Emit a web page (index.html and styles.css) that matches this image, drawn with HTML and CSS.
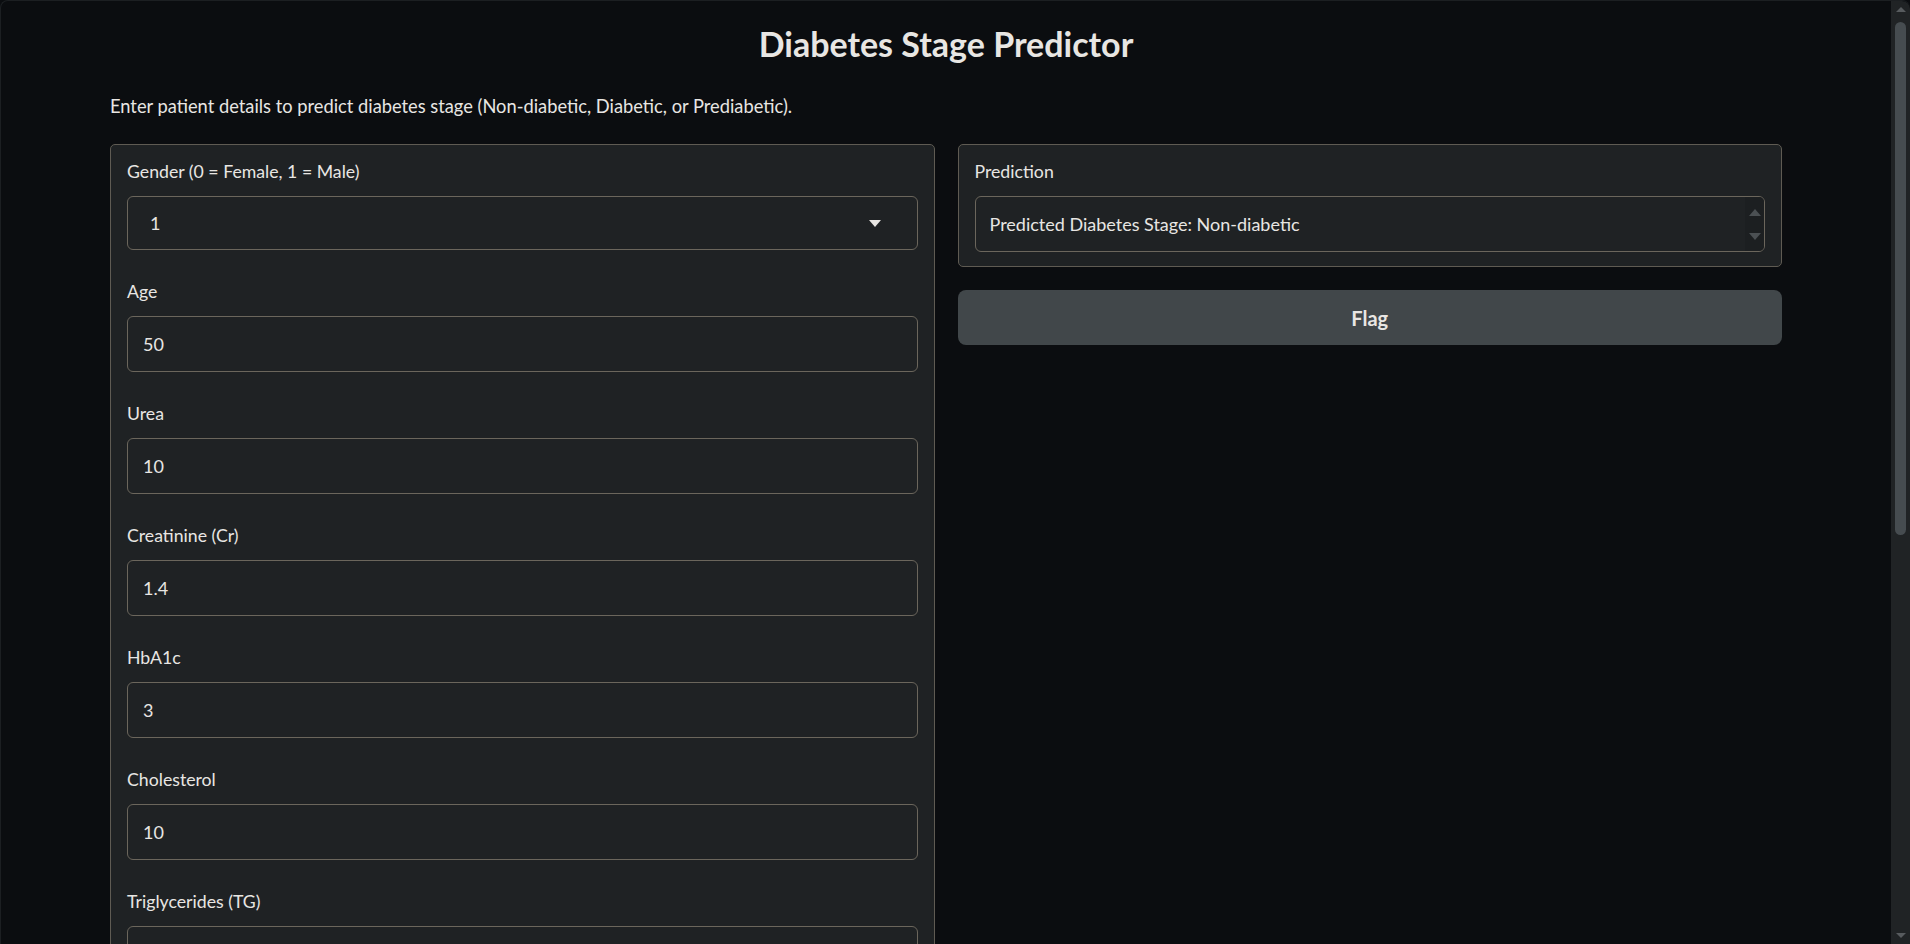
FILE: index.html
```html
<!DOCTYPE html>
<html lang="en">
<head>
<meta charset="utf-8">
<title>Diabetes Stage Predictor</title>
<link rel="stylesheet" href="styles.css">
</head>
<body>
<div class="window">
  <main class="app">
    <div class="container">
      <h1 class="title">Diabetes Stage Predictor</h1>
      <p class="desc">Enter patient details to predict diabetes stage (Non-diabetic, Diabetic, or Prediabetic).</p>
      <div class="row">
        <div class="col">
          <div class="panel form">
            <div class="field">
              <div class="label">Gender (0 = Female, 1 = Male)</div>
              <div class="select">
                <span class="select-value">1</span>
                <svg class="caret" width="12" height="7" viewBox="0 0 12 7"><path d="M0 0H12L6 7Z" fill="#e8e6e3"/></svg>
              </div>
            </div>
            <div class="field">
              <div class="label">Age</div>
              <div class="input">50</div>
            </div>
            <div class="field">
              <div class="label">Urea</div>
              <div class="input">10</div>
            </div>
            <div class="field">
              <div class="label">Creatinine (Cr)</div>
              <div class="input">1.4</div>
            </div>
            <div class="field">
              <div class="label">HbA1c</div>
              <div class="input">3</div>
            </div>
            <div class="field">
              <div class="label">Cholesterol</div>
              <div class="input">10</div>
            </div>
            <div class="field">
              <div class="label">Triglycerides (TG)</div>
              <div class="input"></div>
            </div>
          </div>
        </div>
        <div class="col">
          <div class="panel output">
            <div class="label">Prediction</div>
            <div class="textbox">
              <div class="textbox-text">Predicted Diabetes Stage: Non-diabetic</div>
              <div class="spinner">
                <svg width="12" height="7" viewBox="0 0 12 7"><path d="M0 7H12L6 0Z" fill="#4b5053"/></svg>
                <svg width="12" height="7" viewBox="0 0 12 7"><path d="M0 0H12L6 7Z" fill="#4b5053"/></svg>
              </div>
            </div>
          </div>
          <button class="flag">Flag</button>
        </div>
      </div>
    </div>
  </main>
  <div class="scrollbar">
    <svg class="sb-arrow" width="10" height="5" viewBox="0 0 10 5"><path d="M0 5H10L5 0Z" fill="#575b5e"/></svg>
    <div class="sb-track"><div class="sb-thumb"></div></div>
    <svg class="sb-arrow" width="10" height="5" viewBox="0 0 10 5"><path d="M0 0H10L5 5Z" fill="#575b5e"/></svg>
  </div>
</div>
</body>
</html>
```

FILE: styles.css
```css
html, body {
  margin: 0;
  padding: 0;
  height: 944px;
  overflow: hidden;
  background: #0b0d10;
}

body {
  font-family: Lato, "Open Sans", "Liberation Sans", sans-serif;
  color: #e8e6e3;
}

.window {
  display: flex;
  height: 944px;
  border-top-left-radius: 8px;
  border-top-right-radius: 8px;
  border-top: 1px solid #1c1f22;
  border-left: 1px solid #1c1f22;
  box-sizing: border-box;
  overflow: hidden;
}

.app {
  flex: 1;
  overflow: hidden;
}

.container {
  width: 1672px;
  margin: 0 auto;
}

.title {
  margin: 0;
  padding-top: 22px;
  text-align: center;
  font-size: 34px;
  line-height: 42px;
  font-weight: 700;
}

.desc {
  margin: 29px 0 0 0;
  font-size: 18.3px;
  line-height: 24px;
}

.row {
  display: flex;
  gap: 23px;
  margin-top: 26px;
  align-items: flex-start;
}

.col {
  flex: 1;
  min-width: 0;
  display: flex;
  flex-direction: column;
  gap: 23px;
}

.panel {
  background: #1f2224;
  border: 1px solid #5f5b53;
  border-radius: 5px;
  padding: 16px 16px 14px 16px;
}

.form {
  display: flex;
  flex-direction: column;
  gap: 31px;
  padding-bottom: 16px;
}

.label {
  font-size: 17.7px;
  line-height: 22px;
  height: 22px;
  margin-bottom: 13px;
}

.input,
.select,
.textbox {
  box-sizing: border-box;
  height: 56px;
  border: 1px solid #6b665c;
  border-radius: 6px;
  background: #1f2224;
  font-size: 18px;
  display: flex;
  align-items: center;
}

.input {
  padding-left: 15px;
}

.select {
  height: 54px;
  padding: 0 36px 0 22px;
  justify-content: space-between;
}

.textbox {
  padding-left: 14px;
  overflow: hidden;
}

.textbox-text {
  flex: 1;
}

.spinner {
  width: 19px;
  align-self: stretch;
  background: #1c1f21;
  display: flex;
  flex-direction: column;
  justify-content: space-between;
  align-items: center;
  padding: 12px 0 11px 0;
  box-sizing: border-box;
}

.flag {
  height: 55px;
  border: none;
  border-radius: 8px;
  background: #41474a;
  color: #e8e6e3;
  font-family: inherit;
  font-size: 20px;
  font-weight: 700;
  cursor: pointer;
}

.scrollbar {
  width: 19px;
  flex: none;
  background: #202325;
  display: flex;
  flex-direction: column;
  align-items: center;
  padding: 6px 0 6px 0;
  box-sizing: border-box;
  border-top-right-radius: 8px;
}

.sb-track {
  flex: 1;
  width: 100%;
  display: flex;
  justify-content: center;
  padding-top: 10px;
  box-sizing: border-box;
}

.sb-thumb {
  width: 11px;
  height: 513px;
  border-radius: 6px;
  background: #464c50;
}

.sb-arrow {
  flex: none;
}
```
